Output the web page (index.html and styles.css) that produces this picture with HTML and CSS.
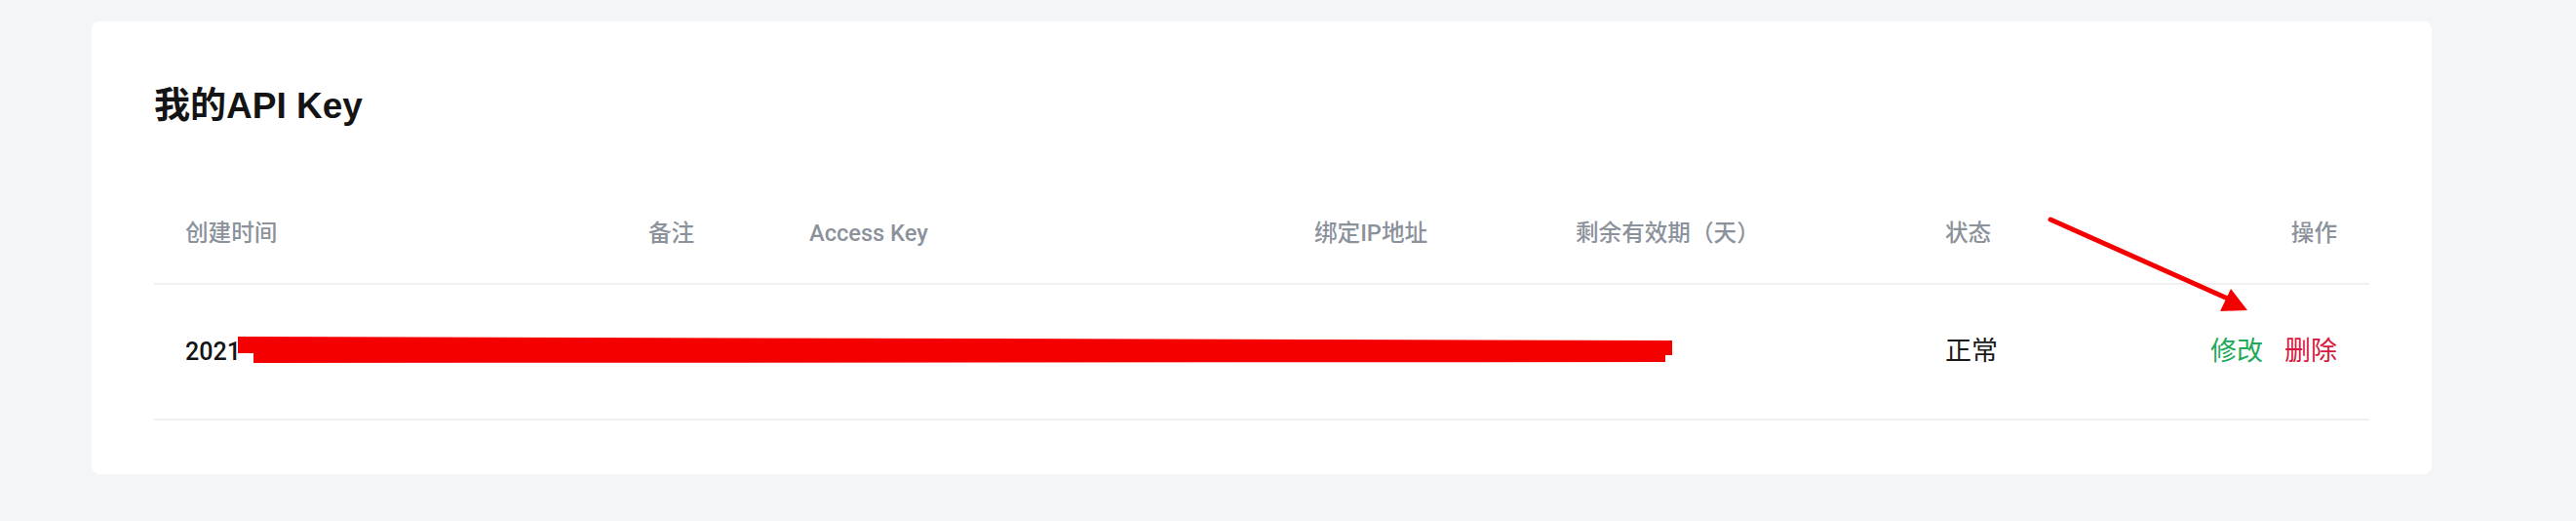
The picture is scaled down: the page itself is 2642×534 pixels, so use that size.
FILE: index.html
```html
<!DOCTYPE html>
<html lang="zh-CN">
<head>
<meta charset="utf-8">
<title>我的API Key</title>
<link rel="stylesheet" href="styles.css">
</head>
<body>
<main class="page">
  <section class="card">
    <h1 class="title">我的API Key</h1>
    <div class="table">
      <div class="row head">
        <div class="cell">创建时间</div>
        <div class="cell">备注</div>
        <div class="cell">Access Key</div>
        <div class="cell">绑定IP地址</div>
        <div class="cell">剩余有效期（天）</div>
        <div class="cell">状态</div>
        <div class="cell right">操作</div>
      </div>
      <div class="row body">
        <div class="cell"><span class="date">2021-</span></div>
        <div class="cell"></div>
        <div class="cell"></div>
        <div class="cell"></div>
        <div class="cell"></div>
        <div class="cell status">正常</div>
        <div class="cell right actions">
          <a class="act edit">修改</a>
          <a class="act del">删除</a>
        </div>
      </div>
    </div>
  </section>
</main>
<svg class="annot" width="2642" height="534" viewBox="0 0 2642 534" aria-hidden="true">
  <polygon points="244,345 1715,349 1715,364 1708,364 1708,371 260,372 260,362 244,362" fill="#f50000"/>
  <line x1="2103" y1="225" x2="2287" y2="307" stroke="#f50000" stroke-width="5" stroke-linecap="round"/>
  <polygon points="2288,296 2277,319 2305,318" fill="#f50000"/>
</svg>
</body>
</html>
```
FILE: styles.css
```css
html, body {
  margin: 0;
  padding: 0;
}
body {
  background: #f4f5f7;
  font-family: "Roboto", "Noto Sans CJK SC", sans-serif;
  color: #1a1a1a;
  width: 2642px;
  height: 534px;
  overflow: hidden;
  position: relative;
}
.page {
  padding: 22px 0 0 94px;
}
.card {
  width: 2400px;
  box-sizing: border-box;
  background: #ffffff;
  border-radius: 8px;
  padding: 61px 64px 55px 64px;
}
.title {
  margin: 0;
  font-family: "Liberation Sans", "Noto Sans CJK SC", sans-serif;
  font-size: 37px;
  font-weight: 700;
  line-height: 52px;
  color: #141414;
}
.table {
  margin-top: 53px;
}
.row {
  display: grid;
  grid-template-columns: 475px 165px 518px 268px 379px 233px 233px;
  border-bottom: 2px solid #f0f0f4;
}
.cell {
  padding: 0 32px;
  white-space: nowrap;
}
.cell.right {
  text-align: right;
}
.head .cell {
  padding-top: 39px;
  padding-bottom: 39px;
  font-size: 23.6px;
  line-height: 24px;
  font-weight: 500;
  color: #8b929b;
}
.body .cell {
  padding-top: 55px;
  padding-bottom: 55px;
  font-size: 27px;
  line-height: 26px;
}
.date {
  font-size: 25px;
  font-weight: 500;
  color: #141414;
}
.status {
  color: #1a1a1a;
}
.actions {
  display: flex;
  justify-content: flex-end;
  gap: 22px;
}
.act {
  cursor: pointer;
}
.act.edit {
  color: #21a95a;
}
.act.del {
  color: #d6193d;
}
.annot {
  position: absolute;
  top: 0;
  left: 0;
  pointer-events: none;
}
```
